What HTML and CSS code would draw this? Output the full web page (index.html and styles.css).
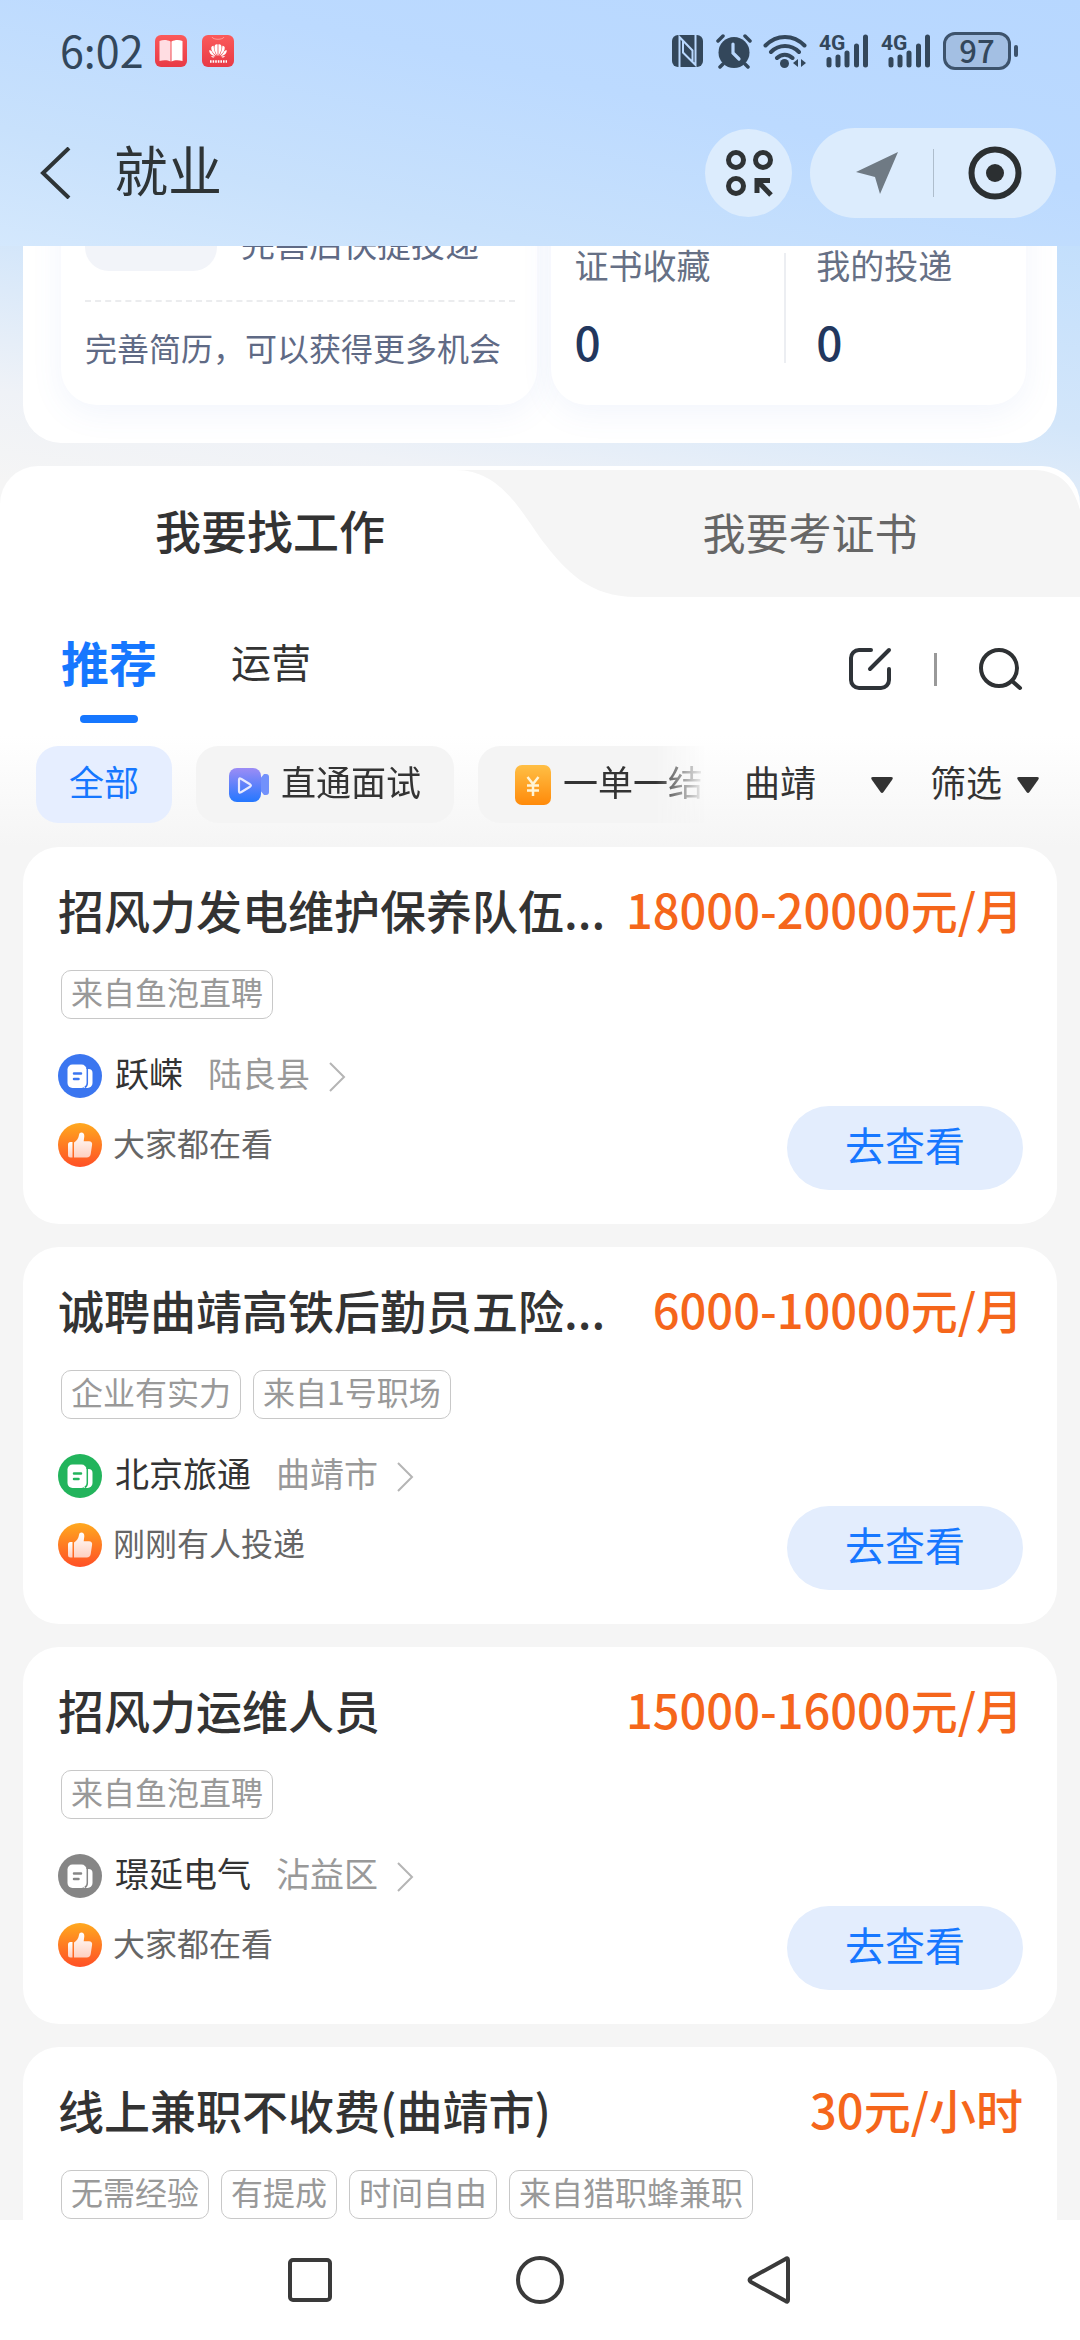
FILE: index.html
```html
<!DOCTYPE html>
<html lang="zh-CN">
<head>
    <meta charset="UTF-8">
    <meta name="viewport" content="width=device-width, initial-scale=1.0">
    <title>就业</title>
    <link rel="stylesheet" href="styles.css">
</head>
<body>
    <!-- shared icons -->
    <svg class="sprite" aria-hidden="true">
        <defs>
            <linearGradient id="g-like" x1="0" y1="0" x2="0" y2="1">
                <stop offset="0" stop-color="#ffa91f"/>
                <stop offset="1" stop-color="#ff4f26"/>
            </linearGradient>
            <linearGradient id="g-thumb" x1="0" y1="0" x2="0" y2="1">
                <stop offset="0" stop-color="#fff"/>
                <stop offset="1" stop-color="#ffd0c0"/>
            </linearGradient>
            <linearGradient id="g-video" x1="0" y1="0" x2="0" y2="1">
                <stop offset="0" stop-color="#9c8cf5"/>
                <stop offset="1" stop-color="#2477ff"/>
            </linearGradient>
            <linearGradient id="g-money" x1="0" y1="0" x2="0" y2="1">
                <stop offset="0" stop-color="#ffbf45"/>
                <stop offset="1" stop-color="#ff8a0a"/>
            </linearGradient>
            <linearGradient id="g-app" x1="0" y1="0" x2="0" y2="1">
                <stop offset="0" stop-color="#fb5a5a"/>
                <stop offset="1" stop-color="#e83a46"/>
            </linearGradient>
        </defs>
        <symbol id="i-company" viewBox="0 0 44 44">
            <circle cx="22" cy="22" r="22" fill="currentColor"/>
            <path d="M28 15h2.500a4 4 0 0 1 4 4v10a5 5 0 0 1-5 5H26z" fill="#fff"/>
            <rect x="9.500" y="10.500" width="19" height="23.500" rx="5" fill="#fff"/>
            <path d="M29.300 14v15a5 5 0 0 1-2.500 4.500" fill="none" stroke="currentColor" stroke-width="1.500"/>
            <path d="M16 19.500h7M16 25h4.500" stroke="currentColor" stroke-width="2.500" stroke-linecap="round"/>
        </symbol>
        <symbol id="i-like" viewBox="0 0 44 44">
            <circle cx="22" cy="22" r="22" fill="url(#g-like)"/>
            <path d="M12.500 19h2v15.500h-2a2.500 2.500 0 0 1-2.500-2.500V21.500a2.500 2.500 0 0 1 2.500-2.500z" fill="url(#g-thumb)"/>
            <path d="M16 19.500c3-1.500 4.500-4.500 5-7.500.3-1.800 1.200-2.500 2.300-2.500 2 0 3.200 1.500 3 4l-.6 4.800H31c2.200 0 3.400 1.500 3.100 3.500l-1.400 9.200c-.3 2.200-1.700 3.500-3.900 3.500H16z" fill="url(#g-thumb)"/>
        </symbol>
        <symbol id="i-more" viewBox="0 0 18 30">
            <path d="M2 1l14 14L2 29" fill="none" stroke="#b5b5b5" stroke-width="2"/>
        </symbol>
        <symbol id="i-down" viewBox="0 0 24 18">
            <path d="M3 1h18q3 0 1 3l-8.500 12q-1.500 2-3 0L2 4Q0 1 3 1z" fill="#333"/>
        </symbol>
        <symbol id="i-signal" viewBox="0 0 52 38">
            <path d="M10 27.500v5.500M19 25v8M28 21v12M37.500 14v19M46.500 5v28" stroke="#33475b" stroke-width="5" stroke-linecap="round"/>
            <text x="0" y="18" class="net">4G</text>
        </symbol>
    </svg>

    <div class="screen">
        <header class="header">
            <div class="status">
                <span class="time">6:02</span>
                <svg class="app" viewBox="0 0 32 32">
                    <rect width="32" height="32" rx="6" fill="url(#g-app)"/>
                    <path d="M4.500 6c4-1.500 8-1 11 .5v20c-3-1.500-7-1.500-11-.5z" fill="#ffdde2"/>
                    <path d="M27.500 6c-4-1.500-8-1-11 .5v20c3-1.500 7-1.500 11-.5z" fill="#fff"/>
                </svg>
                <svg class="app" viewBox="0 0 32 32">
                    <rect width="32" height="32" rx="6" fill="url(#g-app)"/>
                    <path d="M10 2c1 3 11 3 12 0" fill="none" stroke="#ff9c96" stroke-width="1"/>
                    <g fill="#fff">
                        <path d="M15.600 21c-2.600-4-4-8-2.600-11 1-.9 2-.9 2.600-.6zM16.400 21c2.600-4 4-8 2.600-11-1-.9-2-.9-2.600-.6z"/>
                        <path d="M14.600 21c-4-3-5.800-6-5.300-9 .8-.8 1.500-1.200 2.300-1.200.2 3.700 1.300 7 3 10.200zM17.400 21c4-3 5.800-6 5.300-9-.8-.8-1.500-1.200-2.300-1.200-.2 3.700-1.300 7-3 10.200z"/>
                        <path d="M13.600 21.200c-4-.6-6.300-2.700-6.400-6 1-.2 2 .2 2.700 1.200 1 2 2.200 3.300 3.700 4.800zM18.400 21.200c4-.6 6.300-2.700 6.400-6-1-.2-2 .2-2.700 1.200-1 2-2.200 3.300-3.700 4.800z"/>
                        <path d="M8.500 20.800l4.500.9-2 1.100zM23.500 20.800l-4.500.9 2 1.100z"/>
                    </g>
                    <path d="M8 26.500h17" stroke="#fff" stroke-width="2.500" stroke-dasharray="1.600 1"/>
                </svg>
                <span class="spacer"></span>
                <svg class="s-nfc" viewBox="0 0 32 32">
                    <rect width="31" height="32" rx="6" fill="#33475b"/>
                    <path d="M7.500 32V2l13 13.500V27M23.500 0v30L11 17.500V6" fill="none" stroke="#b9d8fe" stroke-width="2"/>
                </svg>
                <svg class="s-alarm" viewBox="0 0 36 36">
                    <circle cx="18" cy="19.500" r="15.500" fill="#33475b"/>
                    <path d="M7 31l-3 3M29 31l3 3M2 8l5-5M34 8l-5-5" stroke="#33475b" stroke-width="3.500" stroke-linecap="round"/>
                    <path d="M17 11v9l6 6" fill="none" stroke="#b9d8fe" stroke-width="3.200" stroke-linecap="round"/>
                </svg>
                <svg class="s-wifi" viewBox="0 0 44 36">
                    <g fill="none" stroke="#33475b" stroke-width="4" stroke-linecap="round">
                        <path d="M2.500 12.500c11-11.500 28-11.500 39 0M8 19c8-8 20-8 28 0M14 25c4.500-4.500 11-4.500 15.500 0"/>
                    </g>
                    <circle cx="21.500" cy="30.500" r="4.500" fill="#33475b"/>
                    <path d="M35 26v8l-5-4zM38 26v8l5-4z" fill="#33475b"/>
                </svg>
                <svg class="s-signal"><use href="#i-signal"/></svg>
                <svg class="s-signal"><use href="#i-signal"/></svg>
                <span class="battery">97</span>
            </div>
            <div class="titlebar">
                <button class="back" aria-label="返回">
                    <svg viewBox="0 0 32 52"><path d="M29 1L3 26l26 25" fill="none" stroke="#2e3436" stroke-width="4"/></svg>
                </button>
                <h1>就业</h1>
                <button class="scan" aria-label="更多服务">
                    <svg viewBox="0 0 48 48" fill="none" stroke="#2f3335" stroke-width="5">
                        <circle cx="11" cy="11" r="7.500"/>
                        <circle cx="38" cy="11" r="7.500"/>
                        <circle cx="11" cy="37" r="7.500"/>
                        <path d="M32 44V31.500h13M32 31.500l14 14.500"/>
                    </svg>
                </button>
                <div class="capsule">
                    <button aria-label="定位">
                        <svg viewBox="0 0 44 44"><path d="M43 1L1 21l19 5 5 17z" fill="#6f7a84"/></svg>
                    </button>
                    <i></i>
                    <button aria-label="关闭">
                        <svg class="target" viewBox="0 0 54 54"><circle cx="27" cy="27" r="23.500" fill="none" stroke="#2b2f31" stroke-width="6"/><circle cx="27" cy="27" r="9" fill="#2b2f31"/></svg>
                    </button>
                </div>
            </div>
        </header>

        <main class="content">
            <section class="profile">
                <div class="inner resume">
                    <div class="resume-top">
                        <div class="avatar"></div>
                        <p>完善后快捷投递</p>
                    </div>
                    <p class="tip">完善简历，可以获得更多机会</p>
                </div>
                <div class="inner stats">
                    <div class="stat"><span>证书收藏</span><b>0</b></div>
                    <i></i>
                    <div class="stat"><span>我的投递</span><b>0</b></div>
                </div>
            </section>

            <section class="panel">
                <div class="tabs">
                    <svg class="tab-shape" viewBox="0 0 1080 131" preserveAspectRatio="none">
                        <path d="M456 4C500 4 521 45 541 73C566 106 590 131 636 131H1080V44C1074 20 1060 4 1034 4Z" fill="#f5f5f5"/>
                    </svg>
                    <button class="tab active">我要找工作</button>
                    <button class="tab">我要考证书</button>
                </div>

                <div class="subnav">
                    <button class="sub active">推荐</button>
                    <button class="sub">运营</button>
                    <span class="spacer"></span>
                    <div class="tools">
                        <button aria-label="编辑">
                            <svg viewBox="0 0 44 44" fill="none" stroke="#2e3338" stroke-width="4" stroke-linecap="round"><path d="M23 3H11a8 8 0 0 0-8 8v22a8 8 0 0 0 8 8h22a8 8 0 0 0 8-8V22M22 22L41 3"/></svg>
                        </button>
                        <i></i>
                        <button aria-label="搜索">
                            <svg viewBox="0 0 44 44" fill="none" stroke="#2e3133" stroke-width="4" stroke-linecap="round"><circle cx="20" cy="21" r="18"/><path d="M33 34l8 7"/></svg>
                        </button>
                    </div>
                </div>

                <div class="filters">
                    <div class="chips">
                        <button class="chip active">全部</button>
                        <button class="chip">
                            <svg class="video" viewBox="0 0 40 34">
                                <path d="M30 12l5-6h2q3 0 3 3v15q0 3-3 3h-2l-5-6z" fill="#7291fb"/>
                                <rect width="32" height="34" rx="8" fill="url(#g-video)"/>
                                <path d="M10 12v11q0 2.500 2 1.200l9-5.500q1.800-1.200 0-2.400l-9-5.500Q10 9.500 10 12z" fill="none" stroke="#e8eaff" stroke-width="2.200"/>
                            </svg>
                            直通面试
                        </button>
                        <button class="chip">
                            <svg class="money" viewBox="0 0 36 40">
                                <rect width="36" height="40" rx="7" fill="url(#g-money)"/>
                                <path d="M12.500 12l5.500 7 5.500-7M18 19v12M12 20.500h12M12 25.500h12" fill="none" stroke="#fff4d6" stroke-width="2.500"/>
                            </svg>
                            一单一结
                        </button>
                    </div>
                    <label class="city">
                        <select aria-label="城市">
                            <option>曲靖</option>
                        </select>
                        <svg class="down"><use href="#i-down"/></svg>
                    </label>
                    <button class="filter">筛选<svg class="down"><use href="#i-down"/></svg></button>
                </div>
            </section>

            <section class="jobs">
                <article class="job">
                    <div class="job-head">
                        <h2>招风力发电维护保养队伍...</h2>
                        <span class="pay">18000-20000元/月</span>
                    </div>
                    <div class="tags"><span>来自鱼泡直聘</span></div>
                    <div class="job-foot">
                        <div>
                            <a href="#" class="company"><svg class="blue"><use href="#i-company"/></svg><span>跃嵘</span><em>陆良县</em><svg class="more"><use href="#i-more"/></svg></a>
                            <p class="hot"><svg><use href="#i-like"/></svg><span>大家都在看</span></p>
                        </div>
                        <button class="view">去查看</button>
                    </div>
                </article>

                <article class="job">
                    <div class="job-head">
                        <h2>诚聘曲靖高铁后勤员五险...</h2>
                        <span class="pay">6000-10000元/月</span>
                    </div>
                    <div class="tags"><span>企业有实力</span><span>来自1号职场</span></div>
                    <div class="job-foot">
                        <div>
                            <a href="#" class="company"><svg class="green"><use href="#i-company"/></svg><span>北京旅通</span><em>曲靖市</em><svg class="more"><use href="#i-more"/></svg></a>
                            <p class="hot"><svg><use href="#i-like"/></svg><span>刚刚有人投递</span></p>
                        </div>
                        <button class="view">去查看</button>
                    </div>
                </article>

                <article class="job">
                    <div class="job-head">
                        <h2>招风力运维人员</h2>
                        <span class="pay">15000-16000元/月</span>
                    </div>
                    <div class="tags"><span>来自鱼泡直聘</span></div>
                    <div class="job-foot">
                        <div>
                            <a href="#" class="company"><svg class="gray"><use href="#i-company"/></svg><span>璟延电气</span><em>沾益区</em><svg class="more"><use href="#i-more"/></svg></a>
                            <p class="hot"><svg><use href="#i-like"/></svg><span>大家都在看</span></p>
                        </div>
                        <button class="view">去查看</button>
                    </div>
                </article>

                <article class="job">
                    <div class="job-head">
                        <h2>线上兼职不收费(曲靖市)</h2>
                        <span class="pay">30元/小时</span>
                    </div>
                    <div class="tags"><span>无需经验</span><span>有提成</span><span>时间自由</span><span>来自猎职蜂兼职</span></div>
                </article>
            </section>
        </main>

        <nav class="sysnav">
            <button aria-label="最近任务"><svg viewBox="0 0 48 48"><rect x="4" y="4" width="40" height="40" rx="3"/></svg></button>
            <button aria-label="主屏幕"><svg viewBox="0 0 48 48"><circle cx="24" cy="24" r="22"/></svg></button>
            <button aria-label="返回"><svg viewBox="0 0 48 48"><path d="M42 4v40q0 3-2.500 1L5 26q-3-2 0-4L39.500 3Q42 1 42 4z"/></svg></button>
        </nav>
    </div>
</body>
</html>
```
FILE: styles.css
```css
* {
    box-sizing: border-box;
    margin: 0;
    padding: 0;
}

body {
    font-family: 'Noto Sans CJK SC', sans-serif;
    background: #f5f5f5;
    color: #333;
}

button, select {
    font: inherit;
    color: inherit;
    background: none;
    border: none;
    cursor: pointer;
}

svg {
    display: block;
    flex: none;
}

.sprite {
    position: absolute;
    width: 0;
    height: 0;
}

.spacer {
    flex: 1;
}

.screen {
    display: flex;
    flex-direction: column;
    height: 100vh;
    overflow: hidden;
}

/* header */
.header {
    background: linear-gradient(192deg, #b7d7ff 0%, #bcdaff 40%, #c8e1fc 75%, #d4e8fd 100%);
}

.status {
    display: flex;
    align-items: center;
    height: 102px;
    padding: 0 64px 0 60px;
    color: #33475b;
}

.time {
    padding-bottom: 4px;
    font-size: 43px;
    line-height: 48px;
    margin-right: 11px;
}

.app {
    width: 32px;
    height: 32px;
    margin-right: 15px;
}

.s-nfc {
    width: 32px;
    height: 32px;
    margin-right: 12px;
}

.s-alarm {
    width: 36px;
    height: 36px;
    margin-right: 11px;
}

.s-wifi {
    width: 44px;
    height: 36px;
    margin-right: 12px;
}

.s-signal {
    width: 52px;
    height: 38px;
    margin-right: 10px;
}

.net {
    font-family: Roboto, sans-serif;
    font-size: 21px;
    font-weight: 700;
    fill: #33475b;
}

.battery {
    position: relative;
    width: 68px;
    height: 38px;
    margin-right: 5px;
    border: 3px solid #3d536c;
    border-radius: 12px;
    background: #a3bfe3;
    font-size: 31px;
    font-weight: 500;
    line-height: 30px;
    text-align: center;
}

.battery::after {
    content: "";
    position: absolute;
    right: -10px;
    top: 10px;
    width: 4px;
    height: 12px;
    border-radius: 2px;
    background: #3d536c;
}

.titlebar {
    display: flex;
    align-items: center;
    height: 144px;
    padding: 0 24px 2px 40px;
}

.back svg {
    width: 32px;
    height: 52px;
}

h1 {
    flex: 1;
    margin-left: 42px;
    padding-bottom: 8px;
    font-size: 54px;
    font-weight: 400;
    line-height: 72px;
    color: #2e3436;
}

.scan {
    display: flex;
    align-items: center;
    justify-content: center;
    width: 87px;
    height: 88px;
    margin-right: 18px;
    border-radius: 50%;
    background: #dcecfd;
}

.scan svg {
    width: 48px;
    height: 48px;
}

.capsule {
    display: flex;
    align-items: center;
    width: 246px;
    height: 90px;
    border-radius: 45px;
    background: #dcecfd;
}

.capsule button {
    flex: 1;
    display: flex;
    justify-content: center;
}

.capsule svg {
    width: 44px;
    height: 44px;
    margin-left: 12px;
}

.capsule .target {
    width: 54px;
    height: 54px;
    margin-left: 0;
}

.capsule i {
    width: 1px;
    height: 48px;
    background: #aebdcc;
}

/* scrolled area */
.content {
    flex: 1;
    overflow: hidden;
    background: linear-gradient(190deg, #c3dffc 0px, #d3e6fa 180px, #eff2f7 330px, #f5f5f5 420px);
}

.profile {
    display: grid;
    grid-template-columns: 1fr 1fr;
    gap: 14px;
    margin: -175px 23px 23px;
    padding: 38px 31px 38px 38px;
    border-radius: 38px;
    background: #fff;
}

.inner {
    border-radius: 36px;
    background: #fff;
    box-shadow: 0 8px 32px rgba(90, 130, 220, 0.08);
}

.resume {
    padding: 30px 22px 34px 24px;
    font-size: 32px;
    color: #5f6a85;
}

.resume-top {
    display: flex;
    align-items: flex-end;
    gap: 24px;
    padding-bottom: 29px;
    border-bottom: 2px dashed #ebecee;
    font-size: 34px;
    line-height: 56px;
}

.avatar {
    width: 132px;
    height: 132px;
    border-radius: 24px;
    background: #f2f4f9;
}

.tip {
    margin-top: 21px;
    line-height: 48px;
}

.stats {
    display: flex;
    align-items: flex-end;
    padding: 0 0 34px 24px;
}

.stats i {
    width: 2px;
    height: 110px;
    margin: 0 30px 8px 0;
    background: #eceef2;
}

.stat {
    display: flex;
    flex-direction: column;
    flex: 1;
    font-size: 34px;
    line-height: 40px;
    color: #667085;
}

.stat b {
    margin-top: 26px;
    font-size: 46px;
    font-weight: 500;
    line-height: 60px;
    color: #22375e;
}

/* tabs and filters */
.panel {
    border-radius: 38px 38px 0 0;
    background: linear-gradient(#fff 270px, #f5f5f5 380px);
    overflow: hidden;
}

.tabs {
    position: relative;
    display: flex;
    height: 131px;
}

.tab-shape {
    position: absolute;
    width: 100%;
    height: 100%;
}

.tab {
    position: relative;
    flex: 1;
    padding-bottom: 2px;
    font-size: 43px;
    color: #666;
}

.tab.active {
    padding-bottom: 6px;
    font-size: 46px;
    font-weight: 500;
    color: #333;
}

.subnav {
    display: flex;
    align-items: flex-start;
    padding: 34px 57px 0 61px;
}

.sub {
    margin-right: 74px;
    font-size: 40px;
    line-height: 60px;
}

.sub.active {
    font-size: 48px;
    font-weight: 700;
    color: #1677ff;
}

.sub.active::after {
    content: "";
    display: block;
    width: 58px;
    height: 8px;
    margin: 24px auto 0;
    border-radius: 4px;
    background: #1677ff;
}

.tools {
    display: flex;
    align-items: center;
    gap: 42px;
    height: 76px;
}

.tools svg {
    width: 44px;
    height: 44px;
}

.tools i {
    width: 3px;
    height: 33px;
    background: #999;
}

.filters {
    display: flex;
    align-items: center;
    padding: 23px 40px 24px 36px;
}

.chips {
    display: flex;
    flex: 1;
    gap: 24px;
    min-width: 0;
    overflow: hidden;
    -webkit-mask-image: linear-gradient(to left, transparent, #000 50px);
    mask-image: linear-gradient(to left, transparent, #000 50px);
}

.chip {
    display: flex;
    flex: none;
    align-items: center;
    height: 77px;
    padding: 0 33px 8px;
    border-radius: 22px;
    background: #f4f4f4;
    font-size: 35px;
    white-space: nowrap;
}

.chip.active {
    background: #e6eeff;
    color: #1677ff;
}

.chip .video {
    width: 40px;
    height: 34px;
    margin: 8px 12px 0 0;
}

.chip .money {
    width: 36px;
    height: 40px;
    margin: 8px 12px 0 4px;
}

.city {
    position: relative;
    width: 150px;
    margin: 0 36px 0 38px;
    font-size: 36px;
}

.city select {
    display: block;
    width: 100%;
    height: 68px;
    padding-bottom: 8px;
    appearance: none;
}

.down {
    width: 24px;
    height: 18px;
}

.city .down {
    position: absolute;
    right: 0;
    top: 25px;
    pointer-events: none;
}

.filter {
    display: flex;
    align-items: center;
    gap: 14px;
    height: 68px;
    padding-bottom: 8px;
    font-size: 36px;
}

.filter .down {
    margin-top: 8px;
}

/* job list */
.jobs {
    display: flex;
    flex-direction: column;
    gap: 23px;
    padding: 0 23px;
    background: #f5f5f5;
}

.job {
    padding: 34px 34px 34px 35px;
    border-radius: 36px;
    background: #fff;
}

.job-head {
    display: flex;
    justify-content: space-between;
    line-height: 56px;
    white-space: nowrap;
}

h2 {
    font-size: 46px;
    font-weight: 500;
}

.pay {
    font-size: 47px;
    font-weight: 500;
    color: #f5661b;
}

.tags {
    display: flex;
    gap: 12px;
    margin: 33px 0 0 3px;
}

.tags span {
    height: 49px;
    padding: 0 9px;
    border: 1px solid #c8c8c8;
    border-radius: 10px;
    font-size: 32px;
    line-height: 40px;
    color: #999;
}

.job-foot {
    display: flex;
    justify-content: space-between;
    margin-top: 35px;
}

.company {
    display: flex;
    align-items: center;
    height: 44px;
    font-size: 34px;
    line-height: 40px;
    color: #333;
    text-decoration: none;
}

.company svg {
    width: 44px;
    height: 44px;
    margin-right: 13px;
}

.company span,
.company em {
    padding-bottom: 6px;
}

.company em {
    margin: 0 18px 0 25px;
    font-style: normal;
    color: #999;
}

.company .more {
    width: 18px;
    height: 30px;
    margin: 2px 0 0;
}

.blue { color: #3b76f0; }
.green { color: #22b45c; }
.gray { color: #868686; }

.hot {
    display: flex;
    align-items: center;
    height: 44px;
    margin-top: 25px;
    font-size: 32px;
    line-height: 40px;
    color: #666;
}

.hot span {
    padding-bottom: 6px;
}

.hot svg {
    width: 44px;
    height: 44px;
    margin-right: 11px;
}

.view {
    width: 236px;
    height: 84px;
    margin-top: 52px;
    padding-bottom: 8px;
    border-radius: 42px;
    background: #e3edfd;
    font-size: 40px;
    color: #1677ff;
}

.sysnav {
    display: flex;
    justify-content: center;
    gap: 182px;
    height: 120px;
    background: #fff;
}

.sysnav svg {
    width: 48px;
    height: 48px;
    fill: none;
    stroke: #3a3a3a;
    stroke-width: 4;
}
```
